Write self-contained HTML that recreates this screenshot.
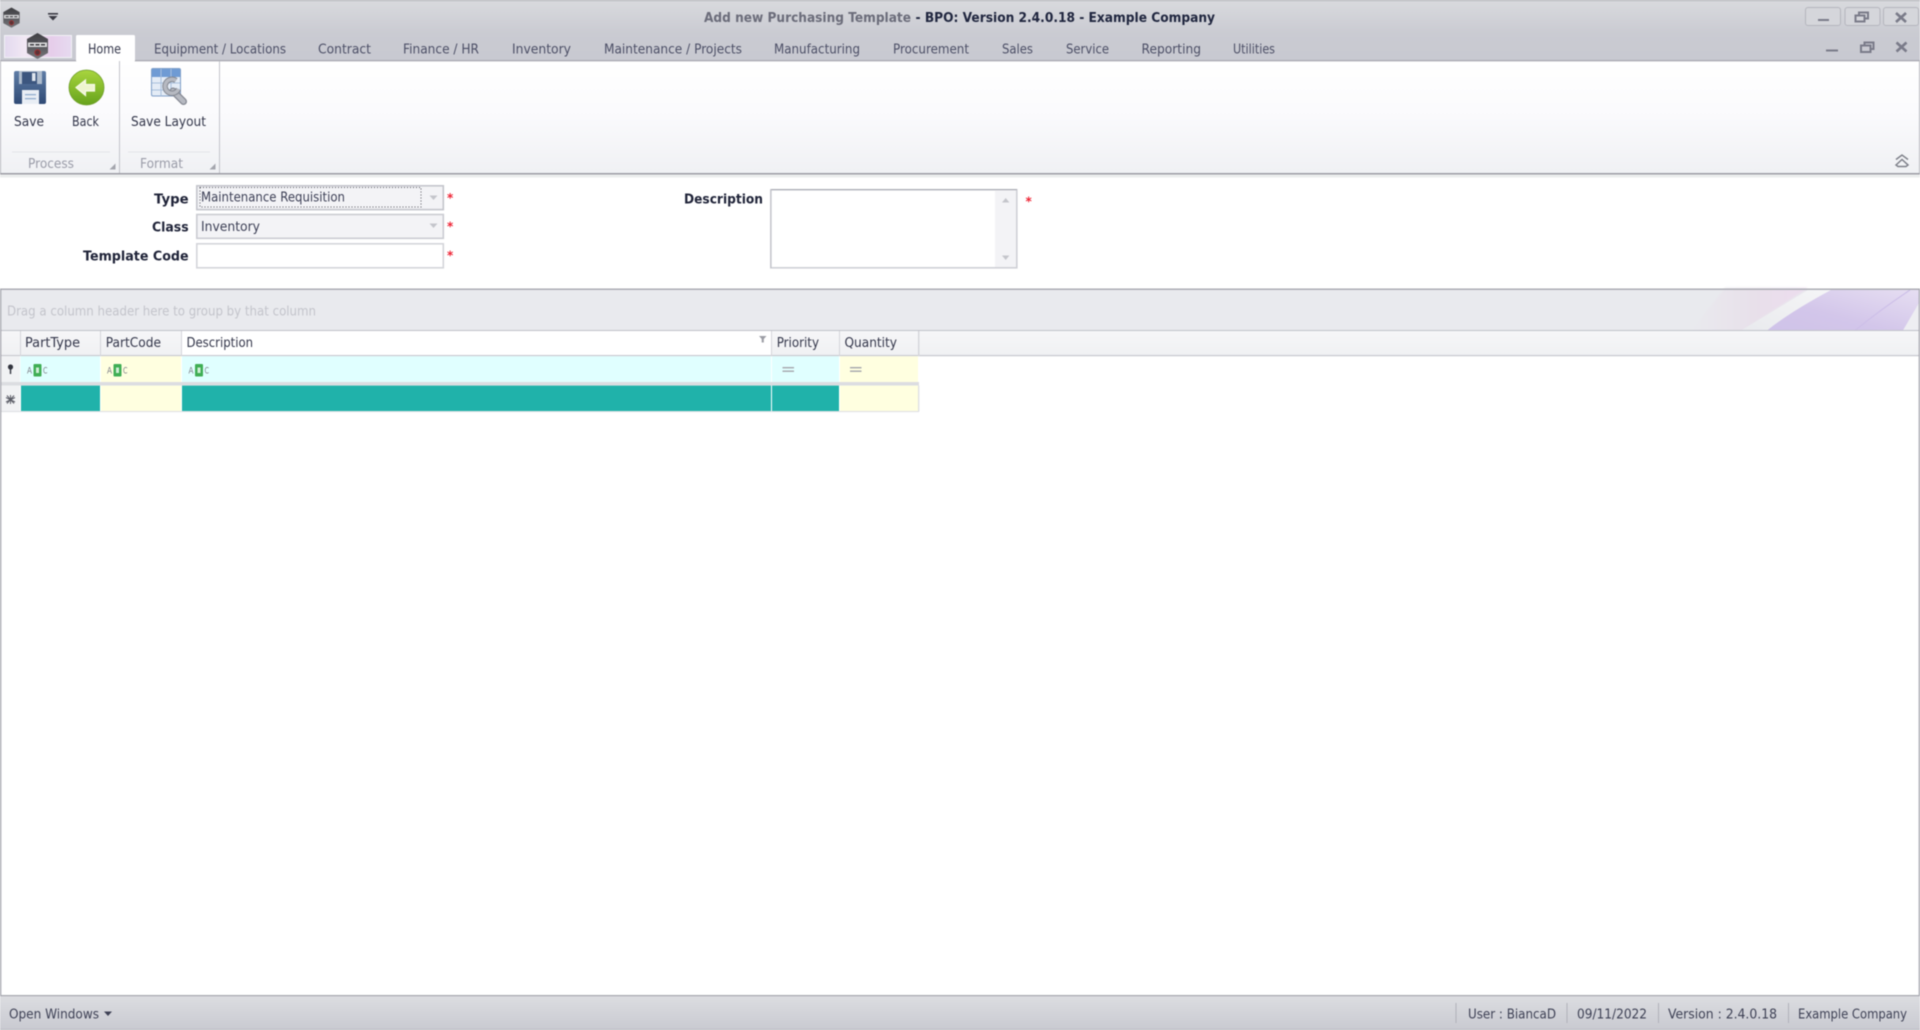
<!DOCTYPE html>
<html lang="en"><head><meta charset="utf-8"><title>Add new Purchasing Template</title>
<style>
html,body{margin:0;padding:0;background:#fff;width:1920px;height:1030px;overflow:hidden}
svg{display:block;filter:blur(.4px)}
text{font-family:"DejaVu Sans","Liberation Sans",sans-serif;font-size:13.2px;fill:#3c3f55}
.t{fill:#4c4f66}
.b{font-weight:bold;fill:#1f2338}
.cap{fill:#9a9ca8}
.g{fill:#33364a}
</style></head><body>
<svg width="1920" height="1030" viewBox="0 0 1920 1030" xmlns="http://www.w3.org/2000/svg">
<defs>
<linearGradient id="tb" x1="0" y1="0" x2="0" y2="1"><stop offset="0" stop-color="#d9dade"/><stop offset=".55" stop-color="#cacbd2"/><stop offset="1" stop-color="#c8c9d1"/></linearGradient>
<linearGradient id="rb" x1="0" y1="0" x2="0" y2="1"><stop offset="0" stop-color="#fff"/><stop offset=".45" stop-color="#fbfbfd"/><stop offset="1" stop-color="#f0f1f4"/></linearGradient>
<linearGradient id="hd" x1="0" y1="0" x2="0" y2="1"><stop offset="0" stop-color="#f6f6f8"/><stop offset="1" stop-color="#f0f1f3"/></linearGradient>
<linearGradient id="st" x1="0" y1="0" x2="0" y2="1"><stop offset="0" stop-color="#dcdde1"/><stop offset="1" stop-color="#c9cad1"/></linearGradient>
<linearGradient id="ab" x1="0" y1="0" x2="1" y2="0"><stop offset="0" stop-color="#e3d9ef"/><stop offset=".3" stop-color="#f1e8f4"/><stop offset=".7" stop-color="#e6cdea"/><stop offset="1" stop-color="#e6daf0"/></linearGradient>
<linearGradient id="gr" x1="0" y1="0" x2="0" y2="1"><stop offset="0" stop-color="#a8d53e"/><stop offset="1" stop-color="#67a31c"/></linearGradient>
<linearGradient id="fl" x1="0" y1="0" x2="0" y2="1"><stop offset="0" stop-color="#5f7da6"/><stop offset="1" stop-color="#2f4a75"/></linearGradient>
<linearGradient id="pk" x1="0" y1="0" x2="1" y2="0"><stop offset="0" stop-color="#e9eaee"/><stop offset=".55" stop-color="#e8e0ea"/><stop offset="1" stop-color="#ecdcee"/></linearGradient>
<linearGradient id="gp" x1="0" y1="1" x2="1" y2="0"><stop offset="0" stop-color="#e9eaee"/><stop offset=".5" stop-color="#eff0f2"/><stop offset="1" stop-color="#f5f5f7"/></linearGradient>
<linearGradient id="pu" x1="0" y1="1" x2="1" y2="0"><stop offset="0" stop-color="#cfc3e9"/><stop offset=".4" stop-color="#d3c6ea"/><stop offset="1" stop-color="#e6def2"/></linearGradient>
<linearGradient id="hx" x1="0" y1="0" x2="0" y2="1"><stop offset="0" stop-color="#3f3f43"/><stop offset=".45" stop-color="#55555a"/><stop offset="1" stop-color="#77777b"/></linearGradient>
<filter id="sf"><feGaussianBlur stdDeviation="1"/></filter>
<g id="hex"><path d="M11.500 0L22 6V20L11.500 26L1 20V6Z" fill="url(#hx)"/><path d="M2 9.500h19v4.500H2z" fill="#dcdcde"/><path d="M4 11h4v1.500H4zM9.500 11h4v1.500h-4zM15 11h4v1.500h-4z" fill="#3b3b40"/><circle cx="11.500" cy="19.500" r="2.700" fill="#5a3336" stroke="#a12f30" stroke-width="1"/></g>
<g id="abc"><text x="0" y="9.500" style="font-size:9px;fill:#7c7e86" textLength="5" lengthAdjust="spacingAndGlyphs">A</text><rect x="6.500" y="0" width="8" height="12.500" rx="1" fill="#3fae54"/><rect x="9" y="3.500" width="3" height="5.500" fill="#cfeed6"/><text x="16" y="9.500" style="font-size:9px;fill:#7c7e86" textLength="4.500" lengthAdjust="spacingAndGlyphs">C</text></g>
</defs>

<!-- title + tab strip -->
<rect width="1920" height="61" fill="url(#tb)"/>
<rect width="1920" height="1" fill="#a9abb2"/>
<rect y="60" width="1920" height="1.400" fill="#a8a9b1"/>
<use href="#hex" transform="translate(2.500 7.500) scale(.78 .78)"/>
<rect x="48" y="13" width="10" height="1.600" fill="#3a3a44"/><path d="M48.500 16h9L53 20.500Z" fill="#3a3a44"/>
<text class="b" x="704" y="22" style="fill:#6b6c7a" textLength="207" lengthAdjust="spacingAndGlyphs">Add new Purchasing Template</text>
<text class="b" x="915.500" y="22" style="fill:#20263f" textLength="299.500" lengthAdjust="spacingAndGlyphs">- BPO: Version 2.4.0.18 - Example Company</text>

<!-- window buttons -->
<g fill="#d5d6db" stroke="#b4b5bd"><rect x="1805.500" y="7.500" width="35" height="18" rx="2.500"/><rect x="1845" y="7.500" width="35" height="18" rx="2.500"/><rect x="1883.500" y="7.500" width="35" height="18" rx="2.500"/></g>
<g fill="none" stroke="#7a7b89" stroke-width="2">
<path d="M1818 20h11"/>
<path d="M1859 15v-2.500h9v6h-3"/><rect x="1855.500" y="15.500" width="9" height="6"/>
<path d="M1826 50.500h12"/>
<path d="M1864.500 45.500v-3h9v6.500h-3.500"/><rect x="1861" y="45.500" width="9.500" height="6.500"/>
</g>
<g fill="none" stroke="#7a7b89" stroke-width="2.600">
<path d="M1896 13l10 9M1906 13l-10 9"/>
<path d="M1896.500 42.500l10 9M1906.500 42.500l-10 9"/>
</g>

<!-- application button -->
<rect x="4.500" y="35.500" width="67" height="22" fill="url(#ab)" stroke="#f2f2f6"/>
<use href="#hex" transform="translate(26 33)"/>

<!-- tabs -->
<path d="M76 61V36.500Q76 35 77.500 35H133.500Q135 35 135 36.500V61Z" fill="#fff"/>
<rect x="76.500" y="61" width="58" height="2" fill="#fff"/>
<text class="g" x="88" y="53.500" textLength="33" lengthAdjust="spacingAndGlyphs">Home</text>
<text class="t" x="154" y="53.500" textLength="132" lengthAdjust="spacingAndGlyphs">Equipment / Locations</text>
<text class="t" x="318" y="53.500" textLength="53" lengthAdjust="spacingAndGlyphs">Contract</text>
<text class="t" x="403" y="53.500" textLength="76" lengthAdjust="spacingAndGlyphs">Finance / HR</text>
<text class="t" x="512" y="53.500" textLength="59" lengthAdjust="spacingAndGlyphs">Inventory</text>
<text class="t" x="604" y="53.500" textLength="138" lengthAdjust="spacingAndGlyphs">Maintenance / Projects</text>
<text class="t" x="774" y="53.500" textLength="86" lengthAdjust="spacingAndGlyphs">Manufacturing</text>
<text class="t" x="893" y="53.500" textLength="76" lengthAdjust="spacingAndGlyphs">Procurement</text>
<text class="t" x="1002" y="53.500" textLength="31" lengthAdjust="spacingAndGlyphs">Sales</text>
<text class="t" x="1066" y="53.500" textLength="43" lengthAdjust="spacingAndGlyphs">Service</text>
<text class="t" x="1141.500" y="53.500" textLength="59.500" lengthAdjust="spacingAndGlyphs">Reporting</text>
<text class="t" x="1233" y="53.500" textLength="42" lengthAdjust="spacingAndGlyphs">Utilities</text>

<!-- ribbon -->
<rect y="61.400" width="1920" height="112" fill="url(#rb)"/>
<rect x="0" y="61" width="1" height="113" fill="#b5b6bd"/><rect x="1919" y="61" width="1" height="113" fill="#b5b6bd"/>
<rect x="119" y="61" width="1" height="113" fill="#c3c4cb"/><rect x="219" y="61" width="1" height="113" fill="#c3c4cb"/>
<rect x="12" y="151.500" width="98" height="1" fill="#e3e4e8"/><rect x="128" y="151.500" width="82" height="1" fill="#e3e4e8"/>
<rect y="173" width="1920" height="1.600" fill="#9d9ea6"/><rect y="174.600" width="1920" height="3" fill="#eceded"/>

<!-- save icon -->
<path d="M16 71H44Q46 71 46 73V102Q46 104 44 104H16Q14 104 14 102V73Q14 71 16 71Z" fill="url(#fl)"/>
<rect x="19" y="71" width="23" height="13" fill="#aebccd"/><rect x="22" y="72" width="15" height="12" fill="#3c567f"/><rect x="32" y="73" width="3.500" height="8" fill="#dfe6ee"/>
<rect x="22" y="90" width="17" height="14" fill="#e9eef5"/><rect x="25" y="94" width="11" height="1.300" fill="#93aecf"/><rect x="25" y="98" width="11" height="1.300" fill="#93aecf"/>
<!-- back icon -->
<circle cx="86.500" cy="87.500" r="17.500" fill="url(#gr)" stroke="#6f9e2b" stroke-width=".8"/>
<path d="M76 87.500L85.500 80V84.500H94.500V91H85.500V95.500Z" fill="#eef5cf" stroke="#f7faea" stroke-width="1.200"/>
<!-- layout icon -->
<rect x="151.500" y="68.500" width="29" height="27.500" rx="1.500" fill="#e4ecf6" stroke="#7f9fc8"/>
<rect x="152" y="69" width="28" height="8" fill="#6f9bd4"/>
<g stroke="#a9c0dd" stroke-width="1"><path d="M161 69v27M171 69v27M152 83h28M152 90h28"/></g>
<g fill="none" stroke-linecap="round">
<path d="M173 91L183.500 101.500" stroke="#848892" stroke-width="7"/>
<path d="M173 91L183.500 101.500" stroke="#b6b9c1" stroke-width="4.500"/>
<path d="M176 80.500a7 7 0 1 0 2.500 8.500" stroke="#848892" stroke-width="5.500" stroke-linecap="butt"/>
<path d="M176 80.500a7 7 0 1 0 2.500 8.500" stroke="#b6b9c1" stroke-width="3.500" stroke-linecap="butt"/>
</g>

<text class="g" x="14" y="126" textLength="30" lengthAdjust="spacingAndGlyphs">Save</text>
<text class="g" x="72" y="126" textLength="27" lengthAdjust="spacingAndGlyphs">Back</text>
<text class="g" x="131" y="126" textLength="75" lengthAdjust="spacingAndGlyphs">Save Layout</text>
<text class="cap" x="28" y="168" textLength="46" lengthAdjust="spacingAndGlyphs">Process</text>
<text class="cap" x="140" y="168" textLength="43" lengthAdjust="spacingAndGlyphs">Format</text>
<path d="M115.500 163.500V169.500H109.500Z" fill="#a4a5ad"/><path d="M215.500 163.500V169.500H209.500Z" fill="#a4a5ad"/>
<path d="M1896 159.500l6-4.500 6 4.500M1896 165l6-5.500 6 5.500-2 1.500h-8Z" fill="none" stroke="#7e8089" stroke-width="1.500"/>

<!-- form -->
<rect y="177.600" width="1920" height="111.400" fill="#fff"/>
<text class="b" x="154" y="203.500" textLength="34.600" lengthAdjust="spacingAndGlyphs">Type</text>
<text class="b" x="152" y="231.500" textLength="36.600" lengthAdjust="spacingAndGlyphs">Class</text>
<text class="b" x="83" y="260.500" textLength="105.600" lengthAdjust="spacingAndGlyphs">Template Code</text>
<text class="b" x="684" y="203.500" textLength="79" lengthAdjust="spacingAndGlyphs">Description</text>

<g stroke-width="1.600">
<rect x="196.800" y="185.800" width="246.500" height="23.800" fill="#f3f3f6" stroke="#c4c5cc"/>
<rect x="196.800" y="214.500" width="246.500" height="23.800" fill="#f3f3f6" stroke="#cbccd2"/>
<rect x="196.800" y="243.800" width="246.500" height="24" fill="#fff" stroke="#d4d5da"/>
<rect x="770.800" y="189.800" width="246" height="78" fill="#fff" stroke="#cfd0d6"/>
</g>
<path d="M771 189.500H1017" stroke="#a9aab2" stroke-width="1"/>
<path d="M771 189.500V268" stroke="#bfc0c7" stroke-width="1"/>
<rect x="995" y="191" width="21" height="76" fill="#f3f3f6"/>
<path d="M1002 202.500l3.700-4.500 3.700 4.500Z" fill="#c4c5cb"/><path d="M1002 255.500l3.700 4.500 3.700-4.500Z" fill="#c4c5cb"/>
<rect x="200" y="187.500" width="221" height="19.500" fill="none" stroke="#55565f" stroke-width="1" stroke-dasharray="1 2"/>
<path d="M429.500 195.500h8l-4 4.500Z" fill="#c4c5cb"/><path d="M429.500 223.500h8l-4 4.500Z" fill="#c4c5cb"/>
<text class="t" x="201" y="201.500" style="fill:#3c3f55" textLength="144" lengthAdjust="spacingAndGlyphs">Maintenance Requisition</text>
<text class="t" x="201" y="231" style="fill:#3c3f55" textLength="59" lengthAdjust="spacingAndGlyphs">Inventory</text>
<text x="447" y="202" style="fill:#ee2233;font-weight:bold;font-size:12px">*</text><text x="447" y="230.500" style="fill:#ee2233;font-weight:bold;font-size:12px">*</text><text x="447" y="259.500" style="fill:#ee2233;font-weight:bold;font-size:12px">*</text><text x="1025.500" y="205.500" style="fill:#ee2233;font-weight:bold;font-size:12px">*</text>

<!-- group panel -->
<rect x="0" y="289" width="1920" height="41.500" fill="#e9eaee"/>
<g filter="url(#sf)"><path d="M1690 332L1725 288H1808L1741 332Z" fill="url(#pk)"/></g>
<path d="M1741 330.500L1808 290H1831L1767 330.500Z" fill="url(#gp)"/>
<path d="M1767 330.500Q1790 312 1831 290H1919V303L1903 330.500Z" fill="url(#pu)"/>
<path d="M1855 330.500Q1880 310 1910 290" stroke="#cdbfe8" stroke-width="1.200" fill="none"/>
<path d="M1903 330.500L1919 303V330.500Z" fill="#eeeef2"/>
<rect y="288.500" width="1920" height="1.400" fill="#a7a8b0"/>
<rect y="330" width="1920" height="1" fill="#c1c2ca"/>
<text x="7" y="315.500" style="fill:#c3c4cb" textLength="309" lengthAdjust="spacingAndGlyphs">Drag a column header here to group by that column</text>

<!-- header -->
<rect x="0" y="331" width="1920" height="24.500" fill="url(#hd)"/>
<rect x="181.500" y="331" width="590" height="24.500" fill="#fff"/>
<rect y="355" width="1920" height="1.200" fill="#c6c7ce"/>
<g fill="#d4d5da"><rect x="20" y="331" width="1" height="25"/><rect x="100" y="331" width="1" height="25"/><rect x="181" y="331" width="1" height="25"/><rect x="771" y="331" width="1" height="25"/><rect x="839" y="331" width="1" height="25"/><rect x="918" y="331" width="1.400" height="25"/></g>
<text class="g" x="25" y="347" textLength="55" lengthAdjust="spacingAndGlyphs">PartType</text>
<text class="g" x="105.700" y="347" textLength="55.300" lengthAdjust="spacingAndGlyphs">PartCode</text>
<text class="g" x="186.500" y="347" textLength="66.500" lengthAdjust="spacingAndGlyphs">Description</text>
<text class="g" x="776.700" y="347" textLength="42.300" lengthAdjust="spacingAndGlyphs">Priority</text>
<text class="g" x="844.500" y="347" textLength="52.500" lengthAdjust="spacingAndGlyphs">Quantity</text>
<path d="M759 336h7.500l-2.700 3v3.500h-2.100V339Z" fill="#9c9da5"/>

<!-- filter row -->
<rect x="0" y="356.200" width="20" height="25.800" fill="#f1f2f4"/>
<rect x="20.500" y="356.200" width="79.500" height="25.800" fill="#e0ffff"/>
<rect x="101" y="356.200" width="80" height="25.800" fill="#ffffe0"/>
<rect x="182" y="356.200" width="589" height="25.800" fill="#e0ffff"/>
<rect x="772" y="356.200" width="67" height="25.800" fill="#e0ffff"/>
<rect x="840" y="356.200" width="78" height="25.800" fill="#ffffe0"/>
<rect x="0" y="382" width="919" height="3.600" fill="#dcdde1"/>
<use href="#abc" transform="translate(27 364)"/><use href="#abc" transform="translate(107 364)"/><use href="#abc" transform="translate(188.500 364)"/>
<g fill="#a5a6ac"><rect x="782.500" y="367" width="11.500" height="1.400"/><rect x="782.500" y="370.500" width="11.500" height="1.400"/><rect x="850" y="367" width="11.500" height="1.400"/><rect x="850" y="370.500" width="11.500" height="1.400"/></g>
<circle cx="10.500" cy="367" r="2.600" fill="#33353f"/><rect x="9.800" y="368" width="1.400" height="6" fill="#33353f"/>

<!-- new row -->
<rect x="0" y="385.600" width="20" height="25.800" fill="#f1f2f4"/>
<rect x="21" y="385.600" width="79" height="25.800" fill="#20b2aa"/>
<rect x="101" y="385.600" width="80" height="25.800" fill="#ffffe0"/>
<rect x="182" y="385.600" width="589" height="25.800" fill="#20b2aa"/>
<rect x="772" y="385.600" width="67" height="25.800" fill="#20b2aa"/>
<rect x="840" y="385.600" width="78" height="25.800" fill="#ffffe0"/>
<rect x="0" y="411" width="919" height="1.200" fill="#dfe0e4"/>
<rect x="918" y="385.600" width="1.400" height="26" fill="#dfe0e4"/>
<g stroke="#5a5c66" stroke-width="1"><path d="M10.500 395v9M6 397.500l9 4.500M15 397.500l-9 4.500M7 395.500l7 8M14 395.500l-7 8"/></g>

<!-- grid body -->
<rect x="0" y="412.200" width="1920" height="583" fill="#fff"/>
<rect x="0" y="289" width="1.300" height="707" fill="#a4a5ad"/>
<rect x="1918.700" y="289" width="1.300" height="707" fill="#a4a5ad"/>

<!-- status -->
<rect y="995.500" width="1920" height="34.500" fill="url(#st)"/>
<rect y="995" width="1920" height="1.200" fill="#a6a7af"/>
<rect y="1029" width="1920" height="1" fill="#b5b6bd"/>
<text class="g" x="9" y="1018.500" style="fill:#3e4155" textLength="90" lengthAdjust="spacingAndGlyphs">Open Windows</text>
<path d="M104 1011.500h8l-4 4.500Z" fill="#3e4155"/>
<g fill="#b0b1b9"><rect x="1455.500" y="1003" width="1" height="20"/><rect x="1566.500" y="1003" width="1" height="20"/><rect x="1658" y="1003" width="1" height="20"/><rect x="1788" y="1003" width="1" height="20"/></g>
<text class="t" x="1468" y="1018.500" style="fill:#3e4155" textLength="88" lengthAdjust="spacingAndGlyphs">User : BiancaD</text>
<text class="t" x="1577" y="1018.500" style="fill:#3e4155" textLength="70" lengthAdjust="spacingAndGlyphs">09/11/2022</text>
<text class="t" x="1668" y="1018.500" style="fill:#3e4155" textLength="109" lengthAdjust="spacingAndGlyphs">Version : 2.4.0.18</text>
<text class="t" x="1798" y="1018.500" style="fill:#3e4155" textLength="109" lengthAdjust="spacingAndGlyphs">Example Company</text>
</svg>
</body></html>
